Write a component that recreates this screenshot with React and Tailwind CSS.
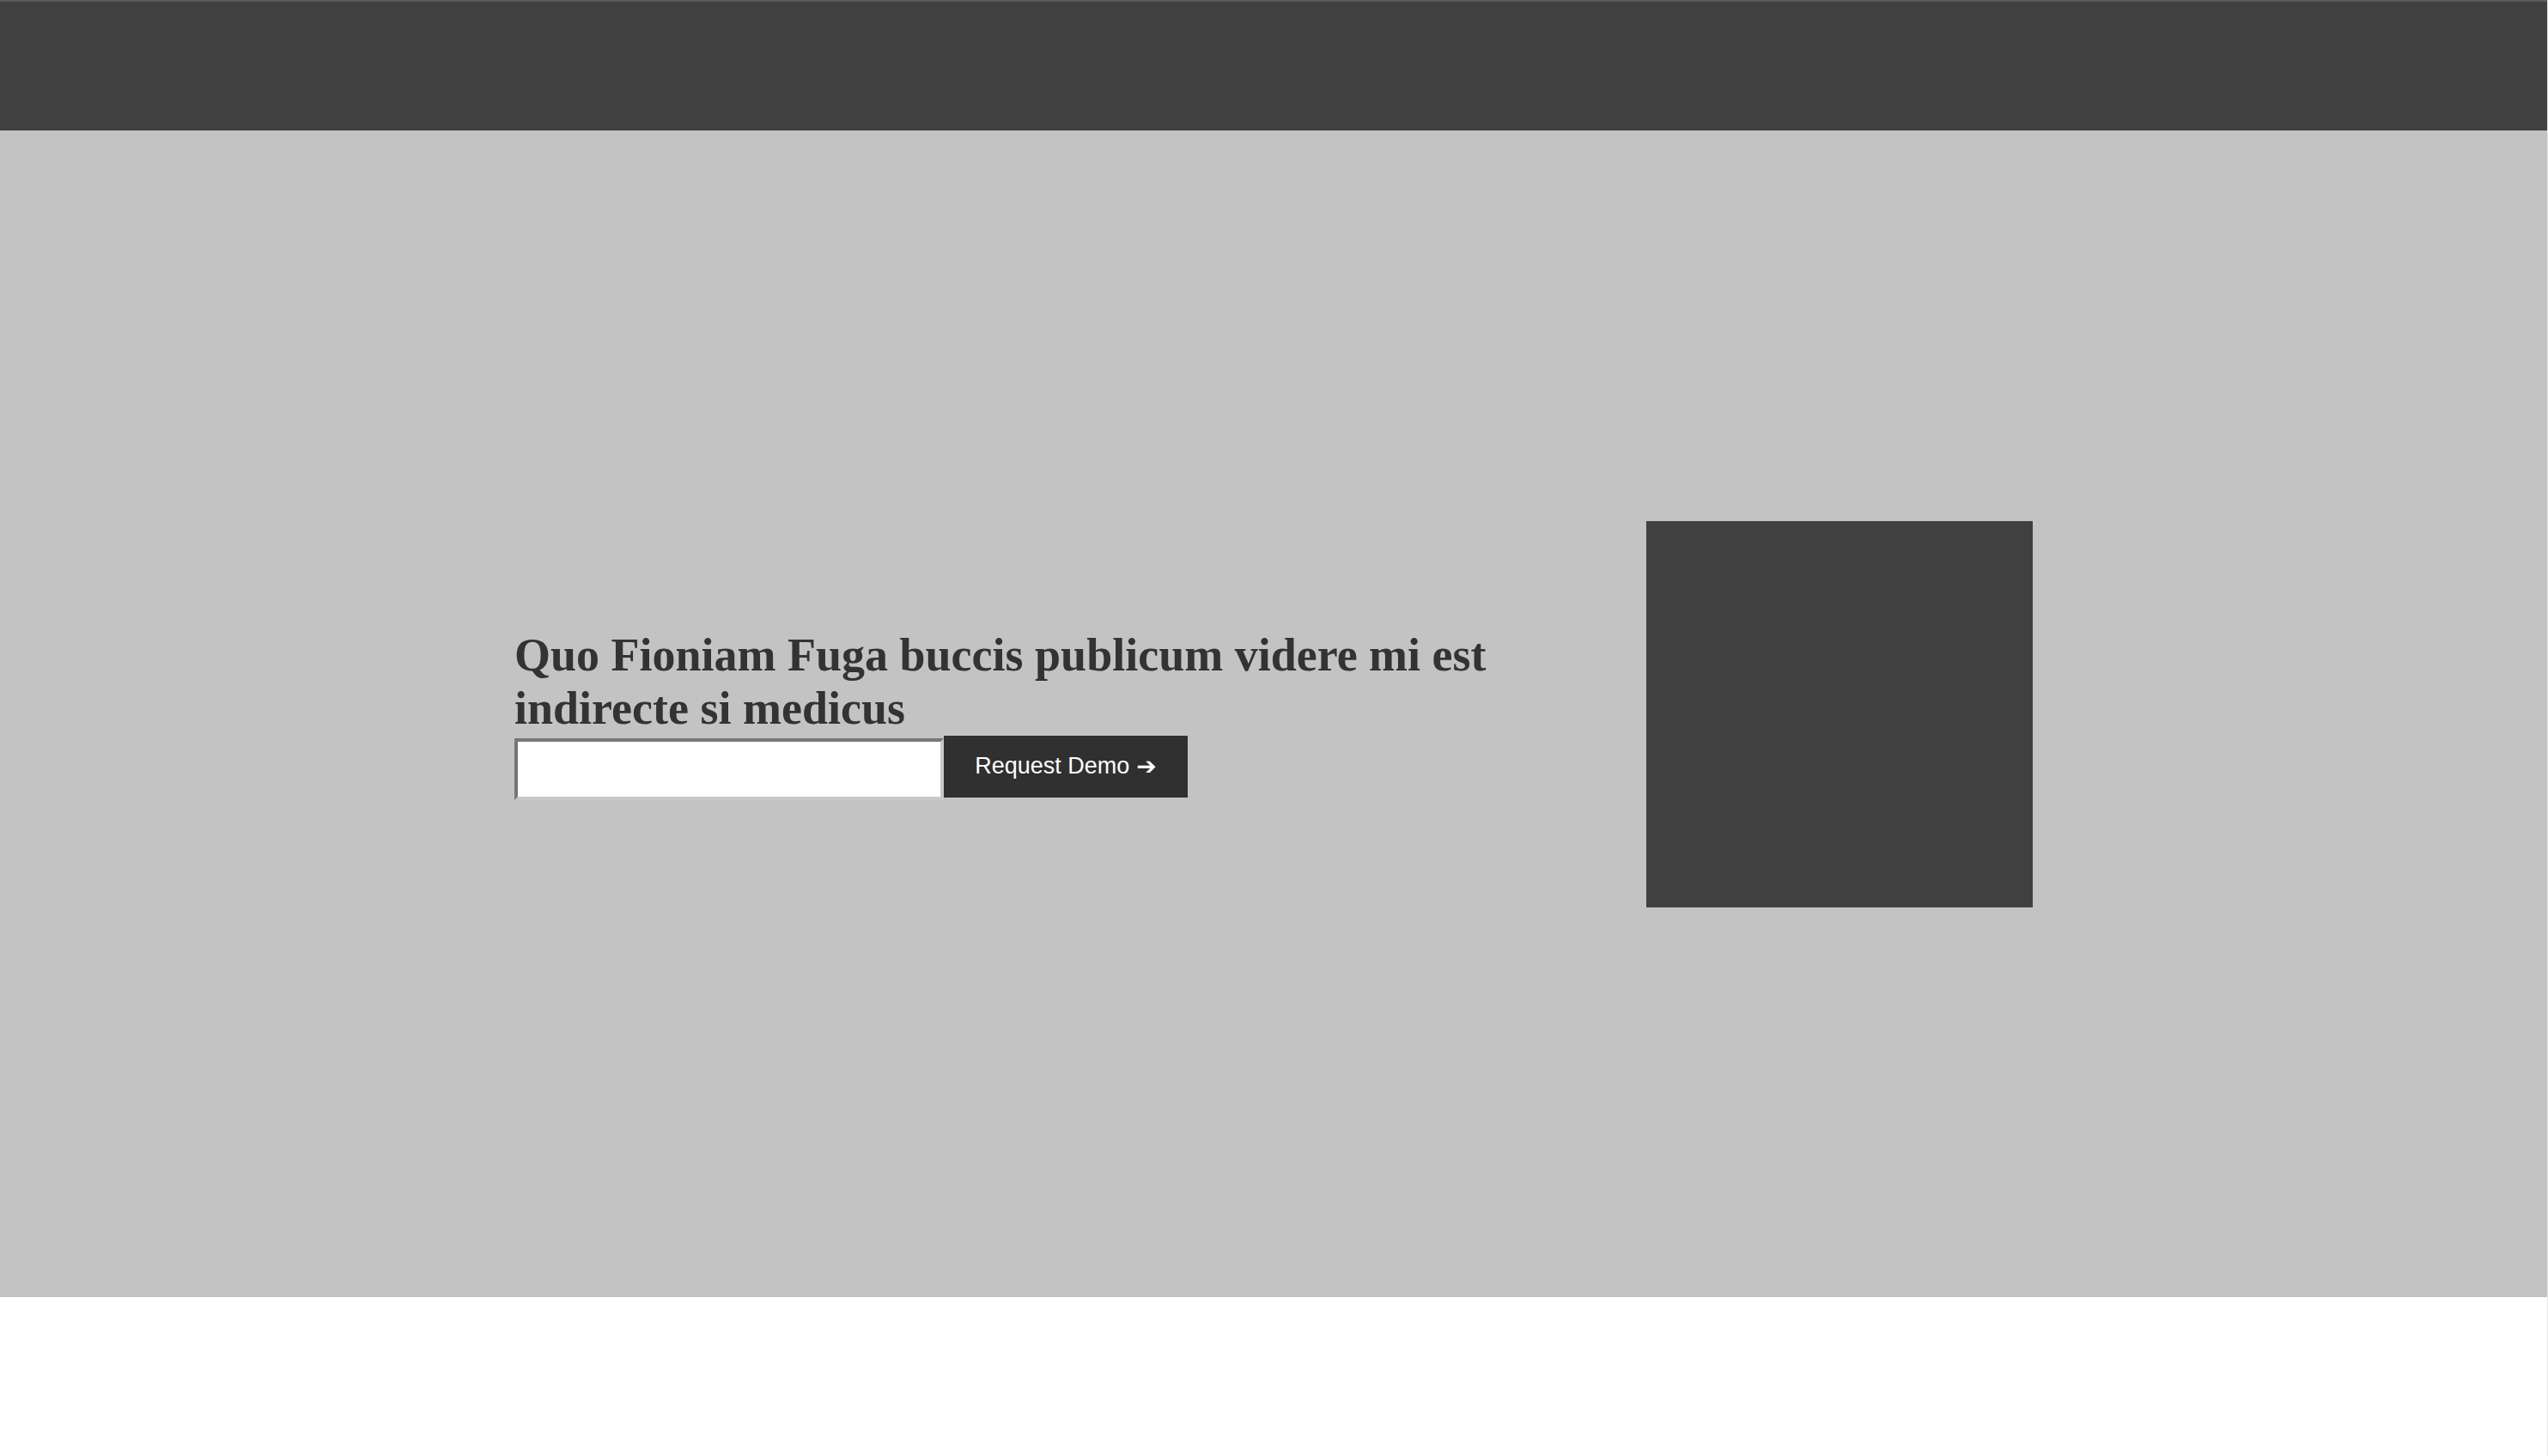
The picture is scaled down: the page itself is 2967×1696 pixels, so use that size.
import React from 'react';

const App = () => {
  return (
    <div className="w-full h-screen overflow-hidden bg-white flex">
      <div className="w-[2966px] flex flex-col">
        {/* header */}
        <header className="h-[152px] shrink-0 bg-[#404040] border-t-2 border-[#5a5960]"></header>

        {/* hero */}
        <section className="h-[1359px] shrink-0 bg-[#c3c3c3] flex items-center">
          <div className="w-[1768px] mx-auto flex items-center justify-between">
            <div className="w-[1200px] flex flex-col">
              <h1 className="text-[54px] leading-[62px] font-bold text-[#333333] font-['Liberation_Serif',serif]">
                Quo Fioniam Fuga buccis publicum videre mi est indirecte si medicus
              </h1>
              <form className="flex items-start mt-px" onSubmit={(e) => e.preventDefault()}>
                <input
                  type="text"
                  className="mt-[3px] w-[500px] h-[72px] bg-white border-4 border-solid border-t-[#767676] border-l-[#767676] border-r-[#c8c8c8] border-b-[#c8c8c8] outline-none"
                />
                <button
                  type="submit"
                  className="w-[284px] h-[72px] bg-[#303030] text-white text-[27px] flex items-center justify-center font-['Liberation_Sans',Arial,sans-serif]"
                >
                  Request Demo <span className="ml-[8px] font-['DejaVu_Sans',sans-serif] text-[28px] leading-none">➔</span>
                </button>
              </form>
            </div>
            <div className="w-[450px] h-[450px] bg-[#404040]"></div>
          </div>
        </section>

        <div className="flex-1 bg-white"></div>
      </div>
      <div className="w-px bg-[#e6e6e6]"></div>
    </div>
  );
};

export default App;
